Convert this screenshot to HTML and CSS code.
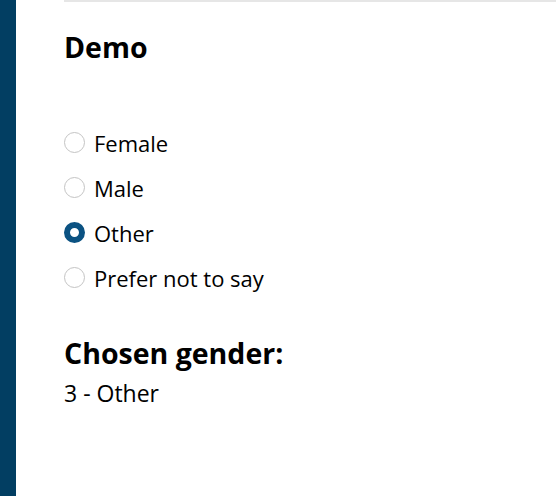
FILE: index.html
```html
<!DOCTYPE html>
<html>
<head>
<meta charset="utf-8">
<link rel="stylesheet" href="styles.css">
</head>
<body>
<div class="page">
  <div class="sidebar"></div>
  <main class="content">
    <h1 class="title">Demo</h1>
    <div class="options">
      <label class="option"><input type="radio" name="g" class="radio"><span>Female</span></label>
      <label class="option"><input type="radio" name="g" class="radio"><span>Male</span></label>
      <label class="option"><input type="radio" name="g" class="radio" checked><span>Other</span></label>
      <label class="option"><input type="radio" name="g" class="radio"><span>Prefer not to say</span></label>
    </div>
    <h2 class="subtitle">Chosen gender:</h2>
    <p class="value">3 - Other</p>
  </main>
</div>
</body>
</html>
```
FILE: styles.css
```css
html, body {
  margin: 0;
  padding: 0;
  height: 100%;
  background: #fff;
}
body {
  font-family: "Open Sans", "Noto Sans", sans-serif;
  color: #000;
}
.page {
  display: flex;
  height: 100%;
}
.sidebar {
  width: 16px;
  flex: none;
  background: #023e62;
}
.content {
  flex: 1;
  margin-left: 48px;
  border-top: 2px solid #e6e6e6;
  padding-top: 26px;
}
.title {
  margin: 0;
  font-size: 28.5px;
  font-weight: 700;
  line-height: 38px;
}
.options {
  margin-top: 54px;
  display: flex;
  flex-direction: column;
}
.option {
  display: flex;
  align-items: center;
  gap: 9px;
  height: 45px;
  font-size: 22px;
}
.radio {
  appearance: none;
  -webkit-appearance: none;
  margin: 0;
  width: 21px;
  height: 21px;
  border-radius: 50%;
  border: 1px solid #c4c4c4;
  background: #fff;
  box-sizing: border-box;
}
.radio:checked {
  border: 6.5px solid #0b5282;
}
.subtitle {
  margin: 34px 0 0;
  font-size: 28.5px;
  font-weight: 700;
  line-height: 38px;
}
.value {
  margin: 2px 0 0;
  font-size: 23px;
  line-height: 38px;
}
```
